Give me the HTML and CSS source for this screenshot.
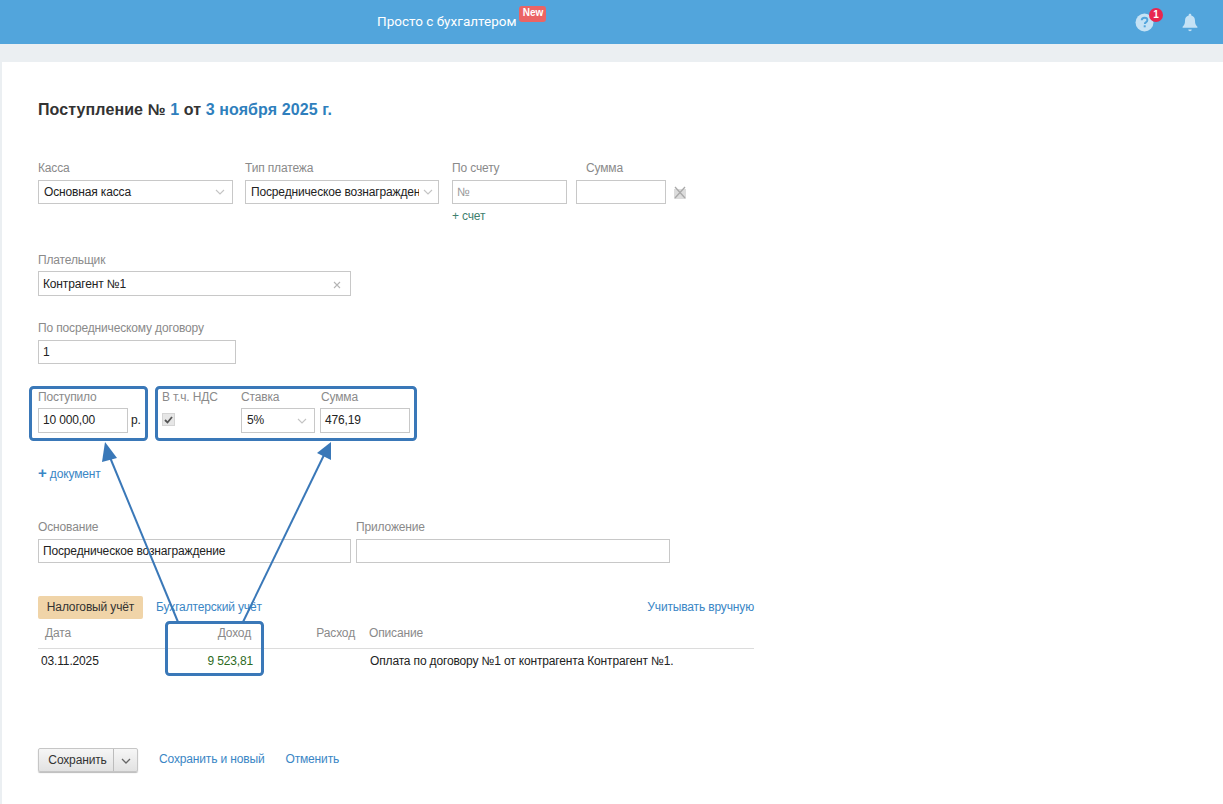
FILE: index.html
```html
<!DOCTYPE html>
<html lang="ru">
<head>
<meta charset="utf-8">
<title>Поступление</title>
<link rel="stylesheet" href="styles.css">
</head>
<body>
<header class="topbar">
  <div class="brand"><span class="brand-name">Просто с бухгалтером</span><span class="new-badge">New</span></div>
  <div class="top-icons">
    <span class="help-icon">
      <svg width="19" height="19" viewBox="0 0 19 19"><circle cx="9.5" cy="9.5" r="9" fill="#c5e2f5"/><path d="M6.7 7.3c0-1.7 1.3-2.6 2.9-2.6s2.8.9 2.8 2.4c0 1.2-.7 1.8-1.5 2.3-.8.5-1.1.8-1.1 1.7" fill="none" stroke="#52a5dc" stroke-width="1.9"/><rect x="8.7" y="12.3" width="2" height="2" fill="#52a5dc"/></svg>
      <span class="count">1</span>
    </span>
    <svg class="bell" width="16" height="19" viewBox="0 0 16 19"><path d="M8 0.8c.8 0 1.3.5 1.3 1.3v.5c2.4.6 3.7 2.6 3.7 5.1 0 3 .7 4.3 2.4 6.1v.9H.6v-.9C2.3 12 3 10.700 3 7.700c0-2.500 1.300-4.500 3.700-5.100v-.5C6.700 1.300 7.200.8 8 .8z" fill="#c5e2f5"/><path d="M6.300 16.500h3.400c0 1-.7 1.700-1.700 1.700s-1.700-.7-1.700-1.700z" fill="#c5e2f5"/></svg>
  </div>
</header>
<div class="band"></div>
<main class="page">
  <h1 class="title">Поступление № <a class="link">1</a> от <a class="link">3 ноября 2025 г.</a></h1>

  <section class="row row-pay">
    <div class="field w195"><label>Касса</label><div class="box select"><span>Основная касса</span><svg class="chev" width="10" height="6" viewBox="0 0 10 6"><path d="M1 1l4 4 4-4" fill="none" stroke="#c4c4c4" stroke-width="1.100"/></svg></div></div>
    <div class="field w194"><label>Тип платежа</label><div class="box select tight"><span class="clip">Посредническое вознаграждение</span><svg class="chev" width="10" height="6" viewBox="0 0 10 6"><path d="M1 1l4 4 4-4" fill="none" stroke="#c4c4c4" stroke-width="1.100"/></svg></div></div>
    <div class="field w115"><label>По счету</label><div class="box muted">№</div><a class="link add-bill">+ счет</a></div>
    <div class="field w90"><label class="indent">Сумма</label><div class="box"></div></div>
    <svg class="del" width="12" height="13" viewBox="0 0 12 13"><rect y="3" width="12" height="10" fill="#dcdcdc"/><path d="M1 1l10 11M11 1L1 12" stroke="#a9a9a9" stroke-width="1.300"/></svg>
  </section>

  <section class="field payer">
    <label>Плательщик</label>
    <div class="box select payer-box"><span>Контрагент №1</span><svg width="8" height="8" viewBox="0 0 8 8"><path d="M1 1l6 6M7 1L1 7" stroke="#b5b5b5" stroke-width="1.100"/></svg></div>
  </section>

  <section class="field contract">
    <label>По посредническому договору</label>
    <div class="box">1</div>
  </section>

  <section class="row row-sum">
    <div class="field w90"><label>Поступило</label><div class="box">10 000,00</div></div>
    <span class="currency">р.</span>
    <div class="field w79"><label>В т.ч. НДС</label><span class="check"><svg width="9" height="8" viewBox="0 0 9 8"><path d="M1 4l2.500 2.500L8 1" fill="none" stroke="#555" stroke-width="1.800"/></svg></span></div>
    <div class="field w74"><label>Ставка</label><div class="box select rate"><span>5%</span><svg class="chev" width="10" height="6" viewBox="0 0 10 6"><path d="M1 1l4 4 4-4" fill="none" stroke="#c4c4c4" stroke-width="1.100"/></svg></div></div>
    <div class="field w90 vat"><label>Сумма</label><div class="box">476,19</div></div>
  </section>

  <a class="link add-doc"><b>+</b> документ</a>

  <section class="row row-basis">
    <div class="field w313"><label>Основание</label><div class="box">Посредническое вознаграждение</div></div>
    <div class="field w314"><label>Приложение</label><div class="box"></div></div>
  </section>

  <section class="ledger">
    <div class="tabs">
      <span class="tab active">Налоговый учёт</span>
      <a class="link tab-link">Бухгалтерский учёт</a>
      <a class="link manual">Учитывать вручную</a>
    </div>
    <div class="grid-row grid-head">
      <span>Дата</span><span class="num">Доход</span><span class="num">Расход</span><span>Описание</span>
    </div>
    <div class="grid-row grid-body">
      <span>03.11.2025</span><span class="num income">9 523,81</span><span></span><span>Оплата по договору №1 от контрагента Контрагент №1.</span>
    </div>
  </section>

  <footer class="actions">
    <div class="split"><span class="save">Сохранить</span><span class="more"><svg width="10" height="6" viewBox="0 0 10 6"><path d="M1 1l4 4 4-4" fill="none" stroke="#666" stroke-width="1.300"/></svg></span></div>
    <a class="link">Сохранить и новый</a>
    <a class="link">Отменить</a>
  </footer>
</main>

<svg class="notes" width="1223" height="804" viewBox="0 0 1223 804">
  <g fill="none" stroke="#3a78b8" stroke-width="3">
    <rect x="30.500" y="387.500" width="116" height="52" rx="3"/>
    <rect x="156.500" y="387.500" width="259" height="52" rx="3"/>
    <rect x="166.500" y="622.500" width="96" height="52" rx="3"/>
  </g>
  <g fill="none" stroke="#3a78b8" stroke-width="2">
    <path d="M178 622 L109 455"/>
    <path d="M243 622 L324 455"/>
  </g>
  <path d="M105 442 L117 458 L102 462 Z" fill="#3a78b8"/>
  <path d="M331 442 L331 460 L317 453 Z" fill="#3a78b8"/>
</svg>
</body>
</html>
```

FILE: styles.css
```css
* { box-sizing: border-box; }
html, body { margin: 0; padding: 0; }
body {
  position: relative;
  width: 1223px;
  height: 804px;
  overflow: hidden;
  background: #ebeff2;
  font: 12px/14px "Liberation Sans", Arial, sans-serif;
  letter-spacing: -0.15px;
  color: #222;
}
.topbar {
  height: 44px;
  background: #52a5dc;
  display: flex;
  justify-content: space-between;
  padding: 0 25px 0 377px;
}
.brand { display: flex; color: #fff; font: 13.5px/16px Roboto, "Liberation Sans", sans-serif; letter-spacing: 0; }
.brand-name { margin-top: 13px; }
.new-badge {
  margin: 6px 0 0 3px;
  width: 27px;
  height: 16px;
  border-radius: 3px;
  background: #eb6464;
  font: bold 10px/14px "Liberation Sans", sans-serif;
  text-align: center;
}
.top-icons { display: flex; gap: 28px; padding-top: 13px; }
.help-icon { position: relative; width: 19px; height: 19px; }
.count {
  position: absolute;
  left: 14px;
  top: -5px;
  width: 14px;
  height: 14px;
  border-radius: 50%;
  background: #e8264f;
  color: #fff;
  font-size: 10px;
  font-weight: bold;
  line-height: 14px;
  text-align: center;
}
.bell { display: block; }
.band { height: 18px; }
.page {
  margin-left: 2px;
  height: 742px;
  background: #fff;
  padding: 38px 0 0 36px;
}
.title {
  margin: 0;
  font-size: 16px;
  line-height: 20px;
  font-weight: bold;
  color: #333;
  letter-spacing: 0.1px;
}
.link { color: #3a86c5; }
.title .link { color: #2f7fbd; }
.row { display: flex; }
.field { display: flex; flex-direction: column; }
.field label { color: #8a8a8a; line-height: 14px; margin-bottom: 5px; }
.box {
  height: 24px;
  border: 1px solid #c8c8c8;
  background: #fff;
  padding: 0 4px;
  line-height: 22px;
  color: #222;
  white-space: nowrap;
}
.select { display: flex; align-items: center; justify-content: space-between; padding: 0 7px 0 5px; overflow: hidden; }
.muted { color: #9a9a9a; }
.clip { overflow: hidden; width: 168px; flex: none; }
.tight { padding-right: 5px; }
.w195 { width: 195px; }
.w194 { width: 194px; margin-left: 12px; }
.w115 { width: 115px; margin-left: 13px; }
.w90 { width: 90px; }
.w79 { width: 79px; margin-left: 20px; }
.w74 { width: 74px; }
.w313 { width: 313px; }
.w314 { width: 314px; margin-left: 5px; }
.row-pay { margin-top: 41px; align-items: flex-start; }
.row-pay .w90 { margin-left: 9px; }
.indent { padding-left: 10px; }
.add-bill { margin-top: 5px; line-height: 14px; color: #3f7f6e; }
.del { margin: 25px 0 0 8px; }
.payer { margin-top: 30px; width: 313px; }
.payer label { margin-bottom: 4px; }
.payer-box { height: 25px; padding: 0 9px 0 4px; }
.payer-box svg { margin-top: 2px; }
.contract { margin-top: 25px; width: 198px; }
.row-sum { margin-top: 26px; }
.row-sum label { margin-bottom: 4px; }
.row-sum .box { height: 25px; }
.currency { margin: 23px 0 0 3px; width: 11px; }
.check {
  width: 13px;
  height: 13px;
  margin-top: 5px;
  background: #e6e6e6;
  border: 1px solid #d4d4d4;
  display: flex;
  align-items: center;
  justify-content: center;
}
.rate span { margin-top: -2px; }
.vat { margin-left: 5px; }
.vat label { padding-left: 1px; }
.add-doc { display: block; margin-top: 33px; font-size: 12px; }
.add-doc b { font-size: 15px; font-weight: bold; }
.row-basis { margin-top: 39px; }
.ledger { margin-top: 33px; width: 716px; }
.tabs { display: flex; align-items: center; height: 23px; }
.tabs .link { margin-bottom: 1px; }
.tab { background: #f0d4a8; border-radius: 2px; width: 105px; height: 23px; line-height: 22px; text-align: center; color: #333; }
.tab-link { margin-left: 13px; }
.manual { margin-left: auto; }
.grid-row { display: grid; grid-template-columns: 129px 84px 104px 1fr; column-gap: 0; }
.grid-head { height: 30px; padding-top: 7px; color: #8a8a8a; border-bottom: 1px solid #dcdcdc; }
.grid-head span:first-child { padding-left: 7px; }
.grid-head span:last-child { padding-left: 14px; }
.num { text-align: right; }
.grid-body { padding-top: 5px; }
.grid-body span:first-child { padding-left: 3px; }
.grid-body span:last-child { padding-left: 15px; }
.income { color: #2e6b1f; margin-right: -2px; }
.actions { display: flex; align-items: center; margin-top: 80px; gap: 21px; }
.actions .link { margin-bottom: 2px; }
.split {
  display: flex;
  width: 100px;
  height: 24px;
  border: 1px solid #c6c6c6;
  border-radius: 2px;
  background: linear-gradient(#f6f6f6, #e2e2e2);
  box-shadow: 0 1px 1px #bbb;
}
.save { width: 75px; border-right: 1px solid #bcbcbc; padding-left: 3px; text-align: center; line-height: 22px; color: #333; }
.more { flex: 1; display: flex; align-items: center; justify-content: center; padding-top: 1px; }
.notes { position: absolute; left: 0; top: 0; pointer-events: none; }
```
